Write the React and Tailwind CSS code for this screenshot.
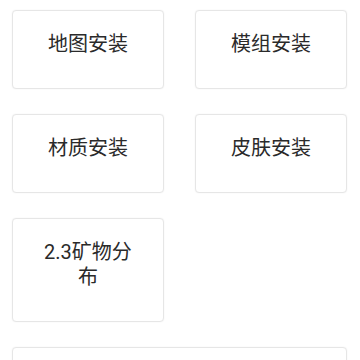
import React from 'react'

const items = ['地图安装', '模组安装', '材质安装', '皮肤安装', '2.3矿物分布']

function Tile({ label, wide }) {
  return (
    <button
      type="button"
      className={
        'bg-white border border-[#e6e6e6] rounded-[4px] shadow-[0_0_2px_rgba(0,0,0,0.06)] px-7 pt-[21px] pb-[31px] text-center text-[20px] leading-[25px] font-normal text-[#2a2a2a] ' +
        (wide ? 'col-span-2' : '')
      }
    >
      {label}
    </button>
  )
}

export default function App() {
  return (
    <div
      className="min-h-screen bg-white pl-3 pr-[13px] pt-[10px]"
      style={{ fontFamily: 'Roboto, "Noto Sans CJK SC", sans-serif' }}
    >
      <div className="grid grid-cols-2 gap-x-[31px] gap-y-[25px] items-start">
        {items.map((t) => (
          <Tile key={t} label={t} />
        ))}
        <Tile label="" wide />
      </div>
    </div>
  )
}
